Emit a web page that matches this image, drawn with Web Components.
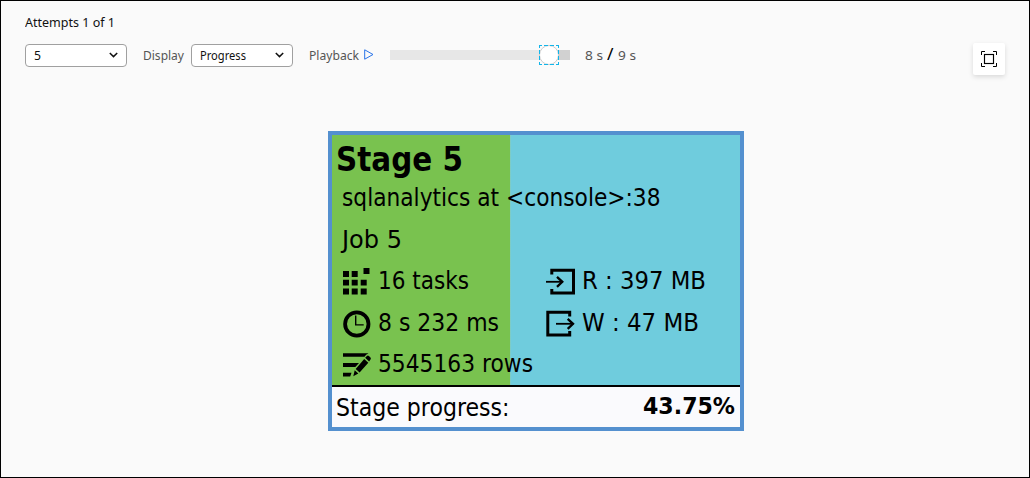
<!DOCTYPE html>
<html lang="en"><head><meta charset="utf-8"><title>Stage graph</title>
<style>html,body{margin:0;height:100%}body{background:#fafafa}</style></head>
<body><stage-view></stage-view>
<script>
const define=(name,html,after)=>customElements.define(name,class extends HTMLElement{
  connectedCallback(){
    if(this.shadowRoot)return;
    this.attachShadow({mode:'open'}).innerHTML=html;
    if(after)after.call(this);
  }
});
// Label that condenses or widens its text to the requested width.
define('fit-text',`<style>:host{display:inline-block;white-space:pre;flex:none}span{display:inline-block;transform-origin:0 50%}</style><span><slot></slot></span>`,function(){
  const s=this.shadowRoot.querySelector('span'),w=+this.getAttribute('w');
  const n=s.getBoundingClientRect().width;
  this.style.width=w+'px';
  s.style.transform='scaleX('+w/n+')';
});
define('drop-down',`<style>:host{display:flex;box-sizing:border-box;width:102px;height:23px;border:1px solid #a0a0a0;border-radius:4px;background:#fff;color:#111;align-items:center;justify-content:space-between;padding:0 8px 0 8px;line-height:19px}fit-text{margin-top:-2px}svg{display:block}</style><slot></slot><svg width="9" height="6" viewBox="0 0 9 6"><path d="M.8 1 4.5 4.6 8.2 1" fill="none" stroke="#111" stroke-width="1.5"/></svg>`);
define('play-slider',`<style>:host{display:flex;width:180px;height:10px;background:#d1d1d1;align-items:center}i{width:149px;height:10px;background:#e7e7e7;flex:none}svg{flex:none;display:block}</style><i></i><svg width="20" height="20" viewBox="0 0 20 20"><rect width="20" height="20" fill="#fafafa"/><path d="M0 5h20v10H0z" fill="#e7e7e7"/><path d="M10 5h10v10H10z" fill="#d1d1d1"/><circle cx="10" cy="10" r="9.5" fill="#fff" stroke="#ccc"/><path d="M0 .5h3M5 .5h4M11 .5h4M17 .5h3M0 19.5h3M5 19.5h4M11 19.5h4M17 19.5h3M.5 0v3M.5 5v4M.5 11v4M.5 17v3M19.5 0v3M19.5 5v4M19.5 11v4M19.5 17v3" stroke="#12b5ea"/></svg>`);
define('fit-button',`<style>:host{display:flex;width:32px;height:32px;background:#fff;border-radius:2px;box-shadow:0 2px 5px #0002;align-items:center;justify-content:center}svg{display:block}</style><svg width="16" height="16" viewBox="0 0 16 16" fill="none" stroke="#000"><path d="M.5 4V.5H4M12 .5h3.5V4M15.5 12v3.5H12M4 15.5H.5V12"/><rect x="3.5" y="3.5" width="9" height="9" stroke-width="1.15"/></svg>`);
define('tool-bar',`<style>
:host{display:flex;height:32px;align-items:center;color:#555;font:12.5px/18px "Noto Sans",sans-serif}
drop-down{margin-top:-8px}play-slider{margin-top:-8px}.d,.p{margin-top:-7px}.d{margin:-6px 7px 0 16px}.p{margin:-6px 5px 0 16px}
play-slider{margin-left:16px}.play{display:block;margin-top:-10px}
.t{display:flex;margin:-7px 0 0 15px}.s{margin:0 4px 0 4px;color:#000;font-size:17px;line-height:14px}
fit-button{margin-left:auto}
</style><drop-down><fit-text w="7">5</fit-text></drop-down><fit-text class="d" w="41">Display</fit-text><drop-down><fit-text w="46">Progress</fit-text></drop-down><fit-text class="p" w="50">Playback</fit-text><svg class="play" width="10" height="11" viewBox="0 0 10 11"><path d="M.7.8 9 5.5.7 10.2z" fill="none" stroke="#2873e8"/></svg><play-slider></play-slider><div class="t"><fit-text w="18">8 s</fit-text><fit-text class="s" w="6.5">/</fit-text><fit-text w="18">9 s</fit-text></div><fit-button></fit-button>`);
const icons={
 tasks:'<path d="M1 4h6v6H1zM9.7 4h6v6h-6zM21.5 1h6v6h-6zM1 12.8h6v5.8H1zM9.7 12.8h6v5.8h-6zM18.7 12.8h6v5.8h-6zM1 21.5h6v6H1zM9.7 21.5h6v6h-6zM18.7 21.5h6v6h-6z"/>',
 time:'<g fill="none" stroke="#000"><circle cx="14.8" cy="15" r="11.7" stroke-width="3.8"/><path d="M13.7 6.6v9.3h8" stroke-width="1.4"/></g>',
 rows:'<path d="M1 3.2h25.5q-2.7 1-4 3.5H1zM1 13h16L13.3 17H1zM1 22.7h8.5L8.2 26.6H1zM22.2 8.9 26.3 12.7 17.6 22.6 13.7 18.9zM23.2 7.7l1.7-1.8q1-.8 2 0l1.6 1.6q.8 1 0 2l-1.4 2zM12.7 20.2l3.6 3.4-5 2.6z"/>',
 read:'<path d="M6.8 7.5V3.3h21.7v22.6H6.8v-4" fill="none" stroke="#000" stroke-width="3"/><path d="M1 14.8h17" fill="none" stroke="#000" stroke-width="1.8"/><path d="M12 9.8l5.3 5-5.3 5" fill="none" stroke="#000" stroke-width="2.3"/>',
 write:'<path d="M24.7 7.5V3.3H2.8v22.6h21.9v-4" fill="none" stroke="#000" stroke-width="3"/><path d="M11 14.8h17.5" fill="none" stroke="#000" stroke-width="1.8"/><path d="M22.7 9.8l5.3 5-5.3 5" fill="none" stroke="#000" stroke-width="2.3"/>'};
define('metric-cell',`<style>:host{display:flex}svg{display:block;width:30px;height:30px;margin:7px var(--gap,6px) 0 0;flex:none}</style><svg viewBox="0 0 30 30"></svg><slot></slot>`,function(){this.shadowRoot.querySelector('svg').innerHTML=icons[this.getAttribute('icon')]});
define('stage-card',`<style>
:host{display:flex;flex-direction:column;box-sizing:border-box;width:416px;height:300px;border:4px solid #5490cf;color:#000;font:25px/41.5px "DejaVu Sans",sans-serif}
.body{height:250px;background:linear-gradient(90deg,#79c24f 178px,#8bcbb0 178px,#6fccdd 179px);box-sizing:border-box;flex:none}
h2{font-size:33px;line-height:41.4px;height:38.4px;padding:4px 0 0 3.5px;margin:0}
.r{height:41.5px;padding-left:10px;display:flex}
metric-cell{width:203px;flex:none}
metric-cell + metric-cell{--gap:7px}
.foot{height:40px;box-sizing:border-box;border-top:2px solid #000;flex:1;display:flex;justify-content:space-between;padding:0 4px;line-height:42px;background:#fafafd}
b{font-size:23px;line-height:38px;margin-right:1px}
</style><div class="body"><h2><fit-text w="127">Stage 5</fit-text></h2>
<div class="r"><fit-text w="318.5">sqlanalytics at &lt;console&gt;:38</fit-text></div>
<div class="r"><fit-text w="60">Job 5</fit-text></div>
<div class="r"><metric-cell icon="tasks"><fit-text w="91">16 tasks</fit-text></metric-cell><metric-cell icon="read"><fit-text w="124">R : 397 MB</fit-text></metric-cell></div>
<div class="r"><metric-cell icon="time"><fit-text w="121">8 s 232 ms</fit-text></metric-cell><metric-cell icon="write"><fit-text w="117">W : 47 MB</fit-text></metric-cell></div>
<div class="r"><metric-cell icon="rows"><fit-text w="155">5545163 rows</fit-text></metric-cell></div></div>
<div class="foot"><fit-text w="173.5">Stage progress:</fit-text><b><fit-text w="92">43.75%</fit-text></b></div>`);
define('stage-view',`<style>:host{display:flex;flex-direction:column;box-sizing:border-box;width:1030px;height:478px;border:1px solid #000;background:#fafafa;padding:13px 24px 0;font:12.5px/18px "Noto Sans",sans-serif;color:#111}
tool-bar{margin-top:11px}stage-card{margin:56px 0 0 303px}</style><fit-text w="90">Attempts 1 of 1</fit-text><tool-bar></tool-bar><stage-card></stage-card>`);
</script></body></html>
